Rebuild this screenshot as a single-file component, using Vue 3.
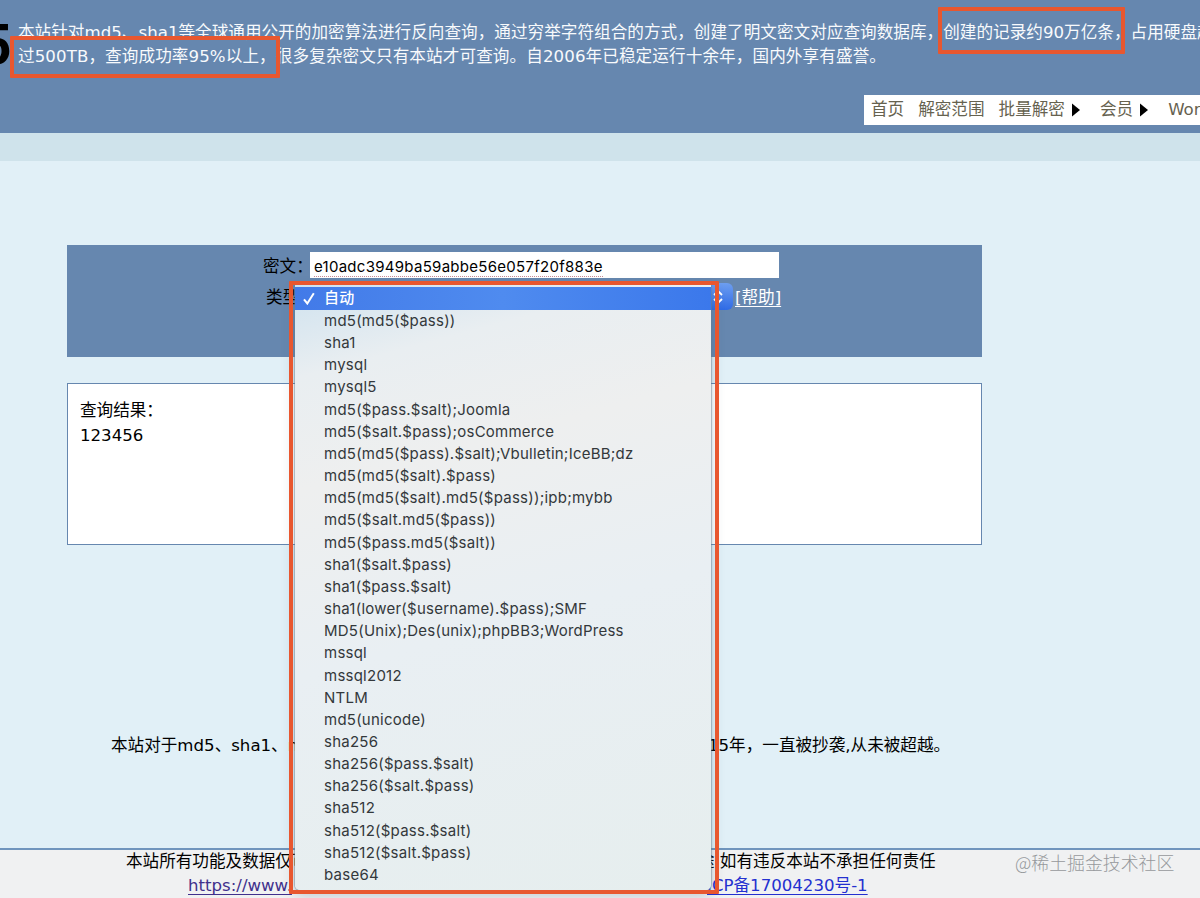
<template>
  <div class="page">
    <header class="header">
      <div class="logo">5</div>
      <div class="intro">
        <p class="line">
          <span v-for="part in introTop" :key="part">{{ part }}</span>
        </p>
        <p class="line line-wide">
          <span v-for="part in introBottom" :key="part">{{ part }}</span>
        </p>
      </div>
      <nav class="nav">
        <a v-for="item in navItems" :key="item.label" class="nav-item">
          {{ item.label }}
          <svg v-if="item.sub" class="arrow" viewBox="0 0 8 14" width="8" height="14">
            <path d="M0 0.5L8 7L0 13.5Z" />
          </svg>
        </a>
      </nav>
      <div class="mark mark-speed"></div>
      <div class="mark mark-count"></div>
    </header>
    <div class="strip"></div>

    <main class="main">
      <form class="panel" @submit.prevent>
        <div class="row">
          <label class="label">密文：</label>
          <div class="cipher"><span class="spell">{{ cipher }}</span></div>
        </div>
        <div class="row row-type">
          <label class="label">类型：</label>
          <div class="select">
            <div class="stepper">
              <svg viewBox="0 0 10 16" width="10" height="16">
                <path d="M1 6L5 2L9 6M1 10L5 14L9 10" />
              </svg>
            </div>
            <div class="mark mark-menu"></div>
            <ul class="menu">
              <li
                v-for="option in options"
                :key="option"
                class="option"
                :class="{ active: option === selected }"
                @click="selected = option"
              >
                <svg v-if="option === selected" class="check" viewBox="0 0 12 13" width="12" height="13">
                  <path d="M1 7.4L4.3 11.5L10.8 1.2" />
                </svg>
                {{ option }}
              </li>
            </ul>
          </div>
          <a class="help">[帮助]</a>
        </div>
      </form>

      <section class="result">
        <p>查询结果：</p>
        <p>{{ result }}</p>
      </section>

      <p class="slogan">
        <span class="slogan-left">本站对于md5、sha1、m</span>
        <span>15年，一直被抄袭,从未被超越。</span>
      </p>
    </main>

    <footer class="footer">
      <p class="foot-line">
        <span class="notice-left">本站所有功能及数据仅可</span>
        <span>途,如有违反本站不承担任何责任</span>
      </p>
      <p class="foot-line">
        <a class="site">https://www.</a>
        <a class="icp">ICP备17004230号-1</a>
      </p>
      <span class="watermark">@稀土掘金技术社区</span>
    </footer>
  </div>
</template>

<script setup>
import { ref } from 'vue'

const introTop = [
  '本站针对md5、sha1等全球通用公开的加密算法进行反向查询，',
  '通过穷举字符组合的方式，创建了明文密文对应查询数据库，',
  '创建的记录约90万亿条，',
  '占用硬盘超'
]

const introBottom = [
  '过500TB，查询成功率95%以上，',
  '很多复杂密文只有本站才可查询。',
  '自2006年已稳定运行十余年，国内外享有盛誉。'
]

const navItems = [
  { label: '首页' },
  { label: '解密范围' },
  { label: '批量解密', sub: true },
  { label: '会员', sub: true },
  { label: 'WordPress' }
]

const options = [
  '自动',
  'md5(md5($pass))',
  'sha1',
  'mysql',
  'mysql5',
  'md5($pass.$salt);Joomla',
  'md5($salt.$pass);osCommerce',
  'md5(md5($pass).$salt);Vbulletin;IceBB;dz',
  'md5(md5($salt).$pass)',
  'md5(md5($salt).md5($pass));ipb;mybb',
  'md5($salt.md5($pass))',
  'md5($pass.md5($salt))',
  'sha1($salt.$pass)',
  'sha1($pass.$salt)',
  'sha1(lower($username).$pass);SMF',
  'MD5(Unix);Des(unix);phpBB3;WordPress',
  'mssql',
  'mssql2012',
  'NTLM',
  'md5(unicode)',
  'sha256',
  'sha256($pass.$salt)',
  'sha256($salt.$pass)',
  'sha512',
  'sha512($pass.$salt)',
  'sha512($salt.$pass)',
  'base64'
]

const cipher = ref('e10adc3949ba59abbe56e057f20f883e')
const selected = ref('自动')
const result = ref('123456')
</script>

<style>
body {
  margin: 0;
  overflow: hidden;
}
</style>

<style scoped>
.page {
  display: flex;
  flex-direction: column;
  width: 1200px;
  height: 898px;
  overflow: hidden;
  background: #e1f0f7;
  color: #000;
  font-family: "DejaVu Sans", "Noto Sans CJK SC", sans-serif;
  font-size: 16.6px;
}

p,
ul {
  margin: 0;
  padding: 0;
  list-style: none;
}

.header {
  position: relative;
  display: flex;
  flex: none;
  flex-direction: column;
  box-sizing: border-box;
  height: 133px;
  padding: 21px 0 0 18px;
  overflow: hidden;
  background: #6687af;
}

.logo {
  position: absolute;
  left: -20px;
  top: 13px;
  font: bold 55px/64px Roboto, sans-serif;
}

.line {
  height: 24px;
  line-height: 24px;
  color: #f8fafc;
  letter-spacing: 0.03px;
  white-space: nowrap;
}

.line-wide {
  letter-spacing: 0.1px;
}

.nav {
  display: flex;
  box-sizing: border-box;
  width: 400px;
  height: 30px;
  margin: 26px 0 0 846px;
  padding-left: 7px;
  background: #fff;
  line-height: 32px;
}

.nav-item {
  display: flex;
  align-items: center;
  flex: none;
  gap: 7px;
  margin-right: 14px;
  color: #66624f;
  white-space: nowrap;
}

.nav-item:nth-child(3),
.nav-item:nth-child(4) {
  margin-right: 20px;
}

.arrow {
  fill: #000;
}

.mark {
  position: absolute;
  box-sizing: border-box;
  border: 4px solid #e8572f;
  border-radius: 1px;
}

.mark-speed {
  left: 10px;
  top: 36px;
  width: 270px;
  height: 42px;
}

.mark-count {
  left: 938px;
  top: 7px;
  width: 187px;
  height: 47px;
}

.strip {
  flex: none;
  height: 28px;
  background: #cfe3eb;
}

.main {
  flex: none;
  height: 687px;
}

.panel {
  box-sizing: border-box;
  width: 915px;
  height: 112px;
  margin: 84px 0 0 67px;
  padding: 7px 0 0 196px;
  background: #6687af;
}

.row {
  display: flex;
  height: 26px;
  line-height: 30px;
}

.row-type {
  height: 28px;
  margin-top: 5px;
  padding-left: 3px;
}

.label {
  flex: none;
  width: 47px;
  white-space: nowrap;
}

.row-type .label {
  width: 29px;
}

.cipher {
  box-sizing: border-box;
  width: 469px;
  padding-left: 4px;
  background: #fff;
  font-family: Inter, sans-serif;
  font-size: 15px;
  letter-spacing: 0.28px;
}

.spell {
  border-bottom: 1px dotted #c78d98;
}

.select {
  position: relative;
  display: flex;
  justify-content: flex-end;
  width: 438px;
}

.stepper {
  display: flex;
  align-items: center;
  justify-content: center;
  width: 27px;
  height: 27px;
  border-radius: 6px;
  background: linear-gradient(#6d9ef0, #2f6be6);
}

.stepper svg {
  margin-right: 3px;
  fill: none;
  stroke: #fff;
  stroke-width: 1.8;
}

.mark-menu {
  left: -6px;
  top: -2px;
  width: 430px;
  height: 613px;
  z-index: 2;
}

.menu {
  position: absolute;
  left: 0;
  top: 2px;
  z-index: 1;
  box-sizing: border-box;
  width: 416px;
  height: 605px;
  padding-top: 2px;
  border-radius: 0 0 5px 5px;
  background: linear-gradient(165deg, #cfe2ef 0, #e9eef1 90px, #eeefef 200px, #e9eff3 380px, #e6eeee 100%);
  box-shadow: 0 0 1px 1px rgba(110, 130, 145, 0.5), 0 5px 14px rgba(50, 90, 120, 0.28);
}

.option {
  position: relative;
  height: 22.17px;
  padding-left: 29px;
  color: #33383b;
  font-family: Inter, "Noto Sans CJK SC", sans-serif;
  font-size: 15px;
  line-height: 22px;
  letter-spacing: 0.24px;
  white-space: nowrap;
}

.option.active {
  height: 23px;
  background: linear-gradient(90deg, #427ae8, #4f8bef 50%, #3b78eb);
  color: #fff;
  font-weight: 500;
}

.check {
  position: absolute;
  left: 8px;
  top: 5px;
  fill: none;
  stroke: #fff;
  stroke-width: 2;
}

.help {
  margin-left: 2px;
  color: #fff;
  text-decoration: underline;
  text-underline-offset: 3px;
}

.result {
  box-sizing: border-box;
  width: 915px;
  height: 162px;
  margin: 26px 0 0 67px;
  padding: 14px 12px;
  border: 1px solid #6687af;
  background: #fff;
  line-height: 25px;
}

.slogan {
  display: flex;
  margin: 188px 0 0 111px;
  line-height: 26px;
  white-space: nowrap;
}

.slogan-left {
  width: 597px;
}

.footer {
  position: relative;
  flex: none;
  height: 48px;
  border-top: 2px solid #7095bd;
  background: #f0f1f2;
}

.foot-line {
  display: flex;
  height: 24px;
  line-height: 24px;
  white-space: nowrap;
}

.notice-left {
  width: 572px;
  margin-left: 126px;
}

.site {
  width: 110px;
  margin-left: 188px;
  color: #40308c;
  text-decoration: underline;
  text-underline-offset: 3px;
}

.icp {
  margin-left: 409px;
  color: #2430d0;
  text-decoration: underline;
  text-underline-offset: 3px;
}

.watermark {
  position: absolute;
  left: 1015px;
  top: 0;
  color: #96999c;
  font: 300 17.9px/24px "Noto Sans CJK SC", sans-serif;
  white-space: nowrap;
}
</style>
